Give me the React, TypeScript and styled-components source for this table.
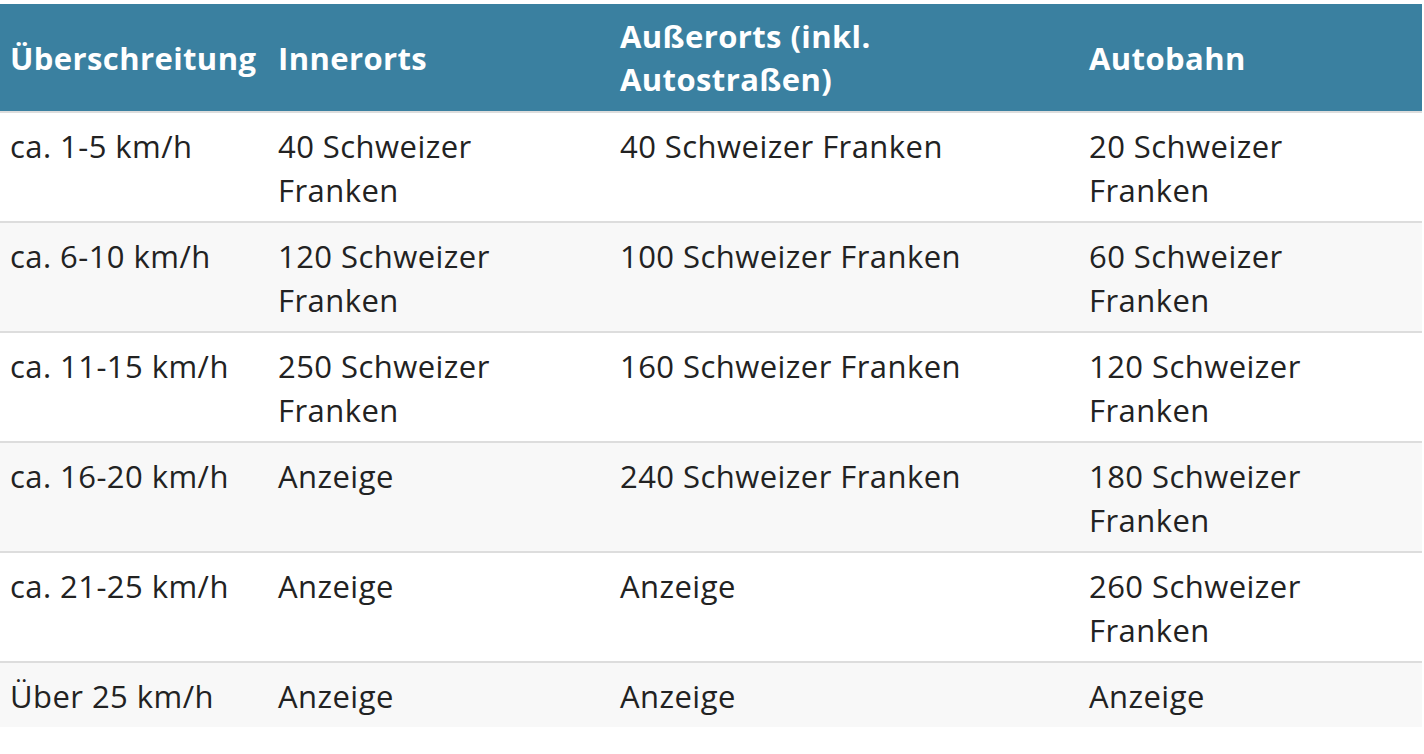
import styled, { createGlobalStyle } from 'styled-components';

const GlobalStyle = createGlobalStyle`
  html, body {
    margin: 0;
    padding: 0;
    background: #fff;
  }
  body {
    font-family: "Open Sans", "Liberation Sans", sans-serif;
    color: #222;
  }
`

const header = ['Überschreitung', 'Innerorts', 'Außerorts (inkl. Autostraßen)', 'Autobahn']

const rows = [
  ['ca. 1-5 km/h', '40 Schweizer Franken', '40 Schweizer Franken', '20 Schweizer Franken'],
  ['ca. 6-10 km/h', '120 Schweizer Franken', '100 Schweizer Franken', '60 Schweizer Franken'],
  ['ca. 11-15 km/h', '250 Schweizer Franken', '160 Schweizer Franken', '120 Schweizer Franken'],
  ['ca. 16-20 km/h', 'Anzeige', '240 Schweizer Franken', '180 Schweizer Franken'],
  ['ca. 21-25 km/h', 'Anzeige', 'Anzeige', '260 Schweizer Franken'],
  ['Über 25 km/h', 'Anzeige', 'Anzeige', 'Anzeige'],
]

const colWidths = [268, 342, 469, 343]

const App = () => {
  return (
    <Page>
      <GlobalStyle />
      <Table>
        <colgroup>
          {colWidths.map((w, i) => <col key={i} width={w} />)}
        </colgroup>
        <thead>
          <tr>
            {header.map((h) => <HeadCell key={h}>{h}</HeadCell>)}
          </tr>
        </thead>
        <tbody>
          {rows.map((r, i) => (
            <Row key={i} $striped={i % 2 === 1}>
              {r.map((c, j) => <Cell key={j}>{c}</Cell>)}
            </Row>
          ))}
        </tbody>
      </Table>
    </Page>
  )
}

export default App;

const Page = styled.div`
  padding-top: 4px;
  width: 1422px;
`
const Table = styled.table`
  width: 1422px;
  table-layout: fixed;
  border-collapse: collapse;
  border-spacing: 0;
`
const HeadCell = styled.th`
  background: #3a80a0;
  color: #fff;
  font-weight: 700;
  font-size: 31px;
  letter-spacing: 0.4px;
  line-height: 43px;
  text-align: left;
  vertical-align: middle;
  padding: 11px 20px 10px 10px;
  border-bottom: 2px solid #dddddd;
`
const Row = styled.tr<{ $striped: boolean }>`
  background: ${(p) => (p.$striped ? '#f8f8f8' : '#ffffff')};
  border-bottom: 2px solid #dddddd;
  &:last-child {
    border-bottom: none;
  }
`
const Cell = styled.td`
  font-size: 31px;
  letter-spacing: 0.45px;
  line-height: 44px;
  padding: 11px 20px 9px 10px;
  vertical-align: top;
  color: #222;
`
